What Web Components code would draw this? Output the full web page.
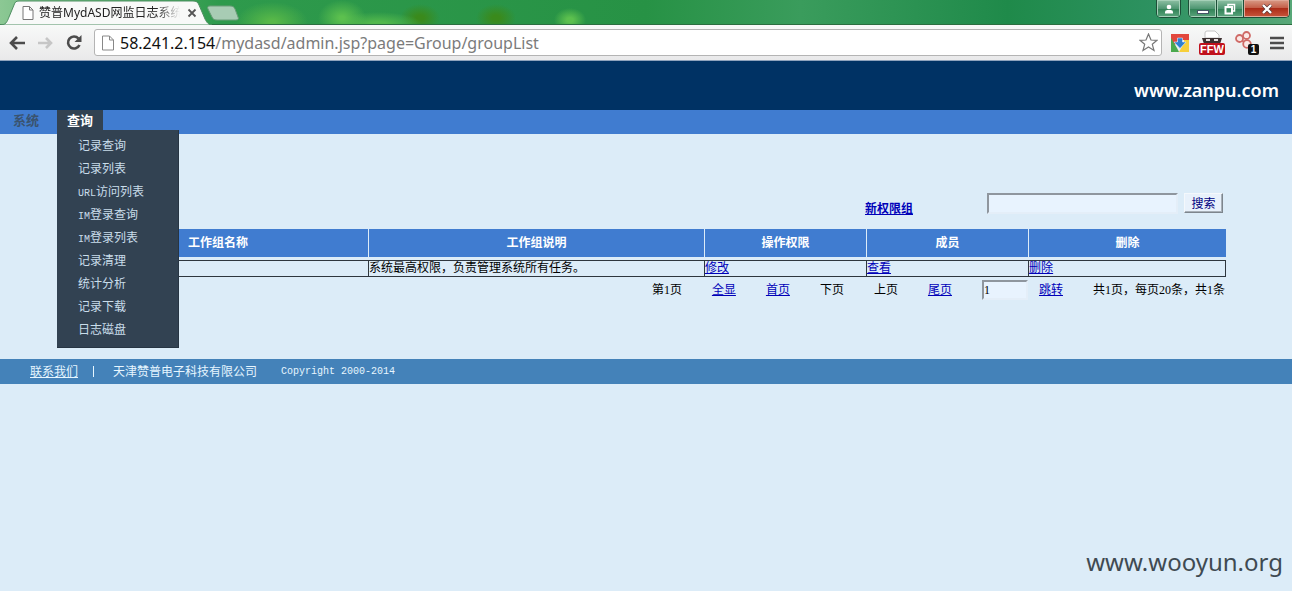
<!DOCTYPE html>
<html lang="zh-CN">
<head>
<meta charset="utf-8">
<title>赞普MydASD网监日志系统</title>
<style>
html, body { margin: 0; background: #dcecf8; }
body { font: 12px/16px "Liberation Serif", "Noto Sans CJK SC", sans-serif; color: #000; }
</style>
</head>
<body>
<app-window></app-window>
<script>
const define = (name, html) => {
  const tpl = document.createElement('template');
  tpl.innerHTML = html;
  customElements.define(name, class extends HTMLElement {
    constructor() {
      super();
      this.attachShadow({ mode: 'open' }).append(tpl.content.cloneNode(true));
    }
  });
};

define('tab-strip', `
<style>
:host { display: flex; height: 25px; overflow: hidden; justify-content: space-between;
  background:
    radial-gradient(ellipse 36px 20px at 272px 22px, #58b848 10%, transparent),
    radial-gradient(ellipse 24px 18px at 342px 18px, #5cc04e 10%, transparent),
    radial-gradient(ellipse 44px 12px at 378px 24px, #52b84c 20%, transparent),
    radial-gradient(ellipse 20px 14px at 420px 18px, #3a8a1c 20%, transparent),
    radial-gradient(ellipse 20px 14px at 496px 18px, #3a8a1c 20%, transparent),
    radial-gradient(ellipse 16px 12px at 570px 20px, #5cc04e 20%, transparent),
    linear-gradient(90deg, #8cc894 0, #6cb87c 60px, #2e9a4c 220px, #279245 50%, #3a9c5c 62%, #1f8a4a 78%, #2e9262 90%, #58a878);
  box-shadow: inset 0 -1px #2c6e40; }
.tab { display: grid; grid-template-areas: "a"; width: 208px; height: 25px; }
.tab > * { grid-area: a; }
.in { display: flex; align-items: center; padding-left: 22px; gap: 5px; font: 12px/16px "Noto Sans", "Noto Sans CJK SC", sans-serif; color: #222; }
.in span { white-space: nowrap; -webkit-mask-image: linear-gradient(90deg, #000 118px, transparent 141px); }
.in button { border: 0; background: none; padding: 0; width: 10px; height: 10px; display: flex; }
.win { display: flex; gap: 7px; align-items: flex-start; margin-right: 2px; }
.grp { display: flex; border: 1px solid #1d4f38; border-top: 0; border-radius: 0 0 5px 5px; overflow: hidden; }
.grp button { box-sizing: border-box; border: 0; padding: 0; height: 17px; width: 27px; display: grid; place-items: center; background: linear-gradient(#8ec0a4, #4f9672 50%, #2f8054 51%, #5aa47c); box-shadow: inset 0 0 0 1px #a6d0b8; }
.grp button + button { border-left: 1px solid #1d4f38; }
.grp .user { width: 23px; }
.grp .x { width: 46px; background: linear-gradient(#d89a86, #c4604a 45%, #ac2c18 50%, #c8563c); box-shadow: inset 0 0 0 1px #e0a898; }
</style>
<div class="tab">
  <svg width="240" height="25" viewBox="0 0 240 25"><path d="M0 25C6 25 7 22 9 17L14 5C15 2 16 1 19 1H193C196 1 198 2 199 5L205 19C207 23 209 25 212 25Z" fill="#f8f9f8" stroke="#4f8f62"/><path d="M210 6H230C233 6 234 7 235 9L238 17C239 19 238 20 236 20H217C214 20 213 19 212 17L208 9C207 7 208 6 210 6Z" fill="#a8ccb4" stroke="#6a9c78"/></svg>
  <div class="in">
    <svg width="12" height="14" viewBox="0 0 12 14"><path d="M1 .5H7.500L11 4V13.500H1ZM7.500 .5V4H11" fill="#fff" stroke="#777"/></svg>
    <span>赞普MydASD网监日志系统</span>
    <button aria-label="关闭标签页"><svg width="10" height="10" viewBox="0 0 10 10"><path d="M1.500 1.500L8.500 8.500M8.500 1.500L1.500 8.500" stroke="#555" stroke-width="1.800"/></svg></button>
  </div>
</div>
<div class="win">
  <div class="grp"><button class="user" aria-label="用户"><svg width="10" height="10" viewBox="0 0 10 10"><circle cx="5" cy="3" r="2.300" fill="#fff"/><path d="M1 9.500V8Q1 6 3.500 6H6.500Q9 6 9 8V9.500Z" fill="#fff"/></svg></button></div>
  <div class="grp"><button aria-label="最小化"><svg width="12" height="12" viewBox="0 0 12 12"><rect x=".5" y="7.500" width="11" height="3" fill="#fff" stroke="#456"/></svg></button><button aria-label="还原"><svg width="12" height="12" viewBox="0 0 12 12"><path d="M4 3V1.500H10.500V8H9" fill="none" stroke="#fff" stroke-width="1.500"/><rect x="1.500" y="4" width="6.500" height="6.500" fill="none" stroke="#fff" stroke-width="2"/></svg></button><button class="x" aria-label="关闭"><svg width="12" height="10" viewBox="0 0 12 10"><path d="M2 1L10 9M10 1L2 9" stroke="#533" stroke-width="3.600"/><path d="M2 1L10 9M10 1L2 9" stroke="#fff" stroke-width="2.400"/></svg></button></div>
</div>`);

define('tool-bar', `
<style>
:host { display: flex; align-items: center; height: 36px; box-sizing: border-box; padding: 0 8px; background: linear-gradient(#f8f9f8, #e9e9ea); border-bottom: 1px solid #8fa3bd; }
button { border: 0; background: none; padding: 0; display: flex; }
.nav { display: flex; gap: 12px; width: 86px; align-items: center; }
.box { flex: 1; display: flex; align-items: center; height: 27px; box-sizing: border-box; border: 1px solid #b4b4b4; border-radius: 3px; background: #fff; padding: 0 3px 0 7px; gap: 6px; font: 16px/22px "Noto Sans", sans-serif; color: #7b7b7b; }
.box a { flex: 1; color: inherit; text-decoration: none; white-space: nowrap; }
b { color: #111; font-weight: 400; }
.ext { display: flex; align-items: center; gap: 8px; padding-left: 8px; }
.menu { margin-left: 2px; }
text { font-family: "Liberation Sans", sans-serif; font-weight: 700; fill: #fff; }
</style>
<div class="nav">
  <button aria-label="后退"><svg width="18" height="16" viewBox="0 0 18 16"><path d="M17 8H3M9 2L3 8L9 14" fill="none" stroke="#4c4c4c" stroke-width="2.600"/></svg></button>
  <button aria-label="前进"><svg width="16" height="16" viewBox="0 0 16 16"><path d="M0 8H13M8 3L13 8L8 13" fill="none" stroke="#c6c6c6" stroke-width="2.600"/></svg></button>
  <button aria-label="刷新"><svg width="17" height="17" viewBox="0 0 17 17"><path d="M13.500 11A6 6 0 1 1 12.500 4.500" fill="none" stroke="#4c4c4c" stroke-width="2.600"/><path d="M15.500 1V8H8.500Z" fill="#4c4c4c"/></svg></button>
</div>
<div class="box">
  <svg width="12" height="16" viewBox="0 0 12 16"><path d="M.5 1H7.500L11.500 5V15H.5ZM7.500 1V5H11.500" fill="#fff" stroke="#888"/></svg>
  <a href="#"><b>58.241.2.154</b>/mydasd/admin.jsp?page=Group/groupList</a>
  <button aria-label="收藏"><svg width="19" height="19" viewBox="0 0 19 19"><path d="M9.500 1L12 7L18 7.300L13.300 11.300L15 17.500L9.500 14L4 17.500L5.700 11.300L1 7.300L7 7Z" fill="#fff" stroke="#777" stroke-width="1.200"/></svg></button>
</div>
<div class="ext">
  <button aria-label="下载扩展"><svg width="20" height="20" viewBox="0 0 20 20"><path d="M1 1H19V7H8L5 12L1 7Z" fill="#e2473c"/><path d="M1 5L7 15L9 19H1Z" fill="#4aa94e"/><path d="M19 7V19H9L14 10V7Z" fill="#f7cf3a"/><path d="M7.500 5H12.500V9H16L10 15.500L4 9H7.500Z" fill="#2d7fd0" stroke="#d8ecff" stroke-width=".6"/></svg></button>
  <button aria-label="FFW"><svg width="28" height="26" viewBox="0 0 28 26"><path d="M7 8V3Q7 1 9 1H17L21 5V8Z" fill="#fff" stroke="#c4c4c4"/><path d="M4 8H24L22 14H6Z" fill="#3c3030"/><rect x="8" y="9" width="4" height="2" fill="#e8e0e0"/><rect x="16" y="9" width="4" height="2" fill="#e8e0e0"/><rect x="1" y="13" width="26" height="12" rx="2" fill="#c0101c"/><text x="14" y="23" font-size="11" text-anchor="middle">FFW</text></svg></button>
  <button aria-label="通知"><svg width="26" height="26" viewBox="0 0 26 26"><g fill="#fbe9e6" stroke="#cf6a66" stroke-width="1.800"><circle cx="5.500" cy="8.500" r="3.500"/><circle cx="12.500" cy="5.500" r="3.500"/><circle cx="13" cy="14" r="3.800"/></g><path d="M8 10.500L10 12" stroke="#cf6a66" stroke-width="1.800"/><rect x="14" y="14" width="11" height="11" rx="2" fill="#111"/><text x="19.500" y="23" font-size="10" text-anchor="middle">1</text></svg></button>
  <button class="menu" aria-label="菜单"><svg width="14" height="14" viewBox="0 0 14 14"><path d="M0 2H14M0 7H14M0 12H14" stroke="#4c4c4c" stroke-width="2.600"/></svg></button>
</div>`);

define('site-banner', `
<style>
:host { display: flex; justify-content: flex-end; align-items: center; height: 49px; box-sizing: border-box; padding: 8px 13px 0 0; background: #003264; color: #fff; font: 600 18px/24px "Noto Sans", sans-serif; }
</style>
<slot></slot>`);

define('site-menu', `
<style>
:host { display: flex; height: 24px; background: #407cd0; font-size: 12px; }
a { color: inherit; text-decoration: none; }
.top { font: 700 13px/22px "Liberation Serif", "Noto Sans CJK SC", sans-serif; color: #3a536f; padding: 0 18px 0 13px; }
.open { position: relative; width: 46px; height: 20px; background: #324252; }
.open > .top { display: block; padding: 0 0 0 10px; color: #fff; }
ul { position: absolute; z-index: 2; left: 0; top: 20px; width: 122px; height: 218px; box-sizing: border-box; margin: 0; padding: 5px 0 5px 21px; list-style: none; background: #324252; border: solid #273543; border-width: 0 1px 1px 0; color: #c9ddea; line-height: 23px; }
li { height: 23px; white-space: nowrap; }
i { font: 10px/16px "Liberation Mono", monospace; }
</style>
<a class="top" href="#">系统</a>
<div class="open"><a class="top" href="#">查询</a>
<ul>
<li><a href="#">记录查询</a></li><li><a href="#">记录列表</a></li><li><a href="#"><i>URL</i>访问列表</a></li><li><a href="#"><i>IM</i>登录查询</a></li><li><a href="#"><i>IM</i>登录列表</a></li><li><a href="#">记录清理</a></li><li><a href="#">统计分析</a></li><li><a href="#">记录下载</a></li><li><a href="#">日志磁盘</a></li>
</ul></div>`);

define('group-search', `
<style>
:host { display: flex; justify-content: flex-end; align-items: flex-start; padding-right: 3px; }
a { font-weight: 700; color: #0000b8; margin: 8px 74px 0 0; }
input { width: 191px; height: 21px; box-sizing: border-box; border: 2px solid; border-color: #8f969e #e4eef8 #e4eef8 #8f969e; background: #e8f3fe; margin-right: 6px; }
button { width: 39px; height: 20px; box-sizing: border-box; padding: 0; border: 1px solid; border-color: #f4f8fc #7d858d #7d858d #f4f8fc; box-shadow: inset -1px -1px #a8b0b8; background: #e8f1fb; color: #000080; font: 12px/16px "Noto Sans CJK SC", sans-serif; }
</style>
<a href="#">新权限组</a><input type="text" aria-label="搜索"><button>搜索</button>`);

define('group-table', `
<style>
:host { display: block; }
table { width: 100%; table-layout: fixed; border-collapse: separate; border-spacing: 0; }
th { height: 28px; padding: 0; background: #407cd0; color: #fff; font-weight: 700; border-right: 1px solid #dcecf8; border-bottom: 3px solid #dcecf8; }
th:last-child { border-right: 0; }
td { height: 15px; padding: 0; line-height: 15px; border: 1px solid #2e363e; border-left-width: 0; white-space: nowrap; }
td:first-child { border-left-width: 1px; }
a { color: #0000b8; }
</style>
<table>
<colgroup><col style="width:26%"><col style="width:29%"><col style="width:14%"><col style="width:14%"><col style="width:17%"></colgroup>
<thead><tr><th>工作组名称</th><th>工作组说明</th><th>操作权限</th><th>成员</th><th>删除</th></tr></thead>
<tbody><tr><td></td><td>系统最高权限，负责管理系统所有任务。</td><td><a href="#">修改</a></td><td><a href="#">查看</a></td><td><a href="#">删除</a></td></tr></tbody>
</table>`);

define('page-nav', `
<style>
:host { display: flex; justify-content: flex-end; align-items: center; gap: 30px; margin-top: 3px; padding-right: 1px; white-space: nowrap; }
a { color: #0000b8; }
.jump { display: flex; align-items: center; gap: 11px; }
input { width: 46px; height: 20px; box-sizing: border-box; padding: 0; border: 2px solid; border-color: #8f969e #e4eef8 #e4eef8 #8f969e; background: #e8f3fe; font: 12px/16px "Liberation Serif", serif; }
</style>
<span>第1页</span><a href="#">全显</a><a href="#">首页</a><span>下页</span><span>上页</span><a href="#">尾页</a>
<span class="jump"><input type="text" value="1" aria-label="页码"><a href="#">跳转</a></span>
<span>共1页，每页20条，共1条</span>`);

define('site-footer', `
<style>
:host { display: flex; align-items: center; height: 25px; padding-left: 30px; background: #4482b9; color: #e6f6ff; }
a { color: inherit; }
i { width: 1px; height: 11px; background: #e6f6ff; margin: 0 19px 0 15px; }
small { font: 10px/16px "Liberation Mono", monospace; margin-left: 24px; }
</style>
<a href="#">联系我们</a><i></i><span>天津赞普电子科技有限公司</span><small>Copyright 2000-2014</small>`);

define('app-window', `
<style>
:host { display: flex; flex-direction: column; min-height: 100vh; }
main { padding: 59px 66px 59px 68px; }
group-table { margin-top: 12px; }
.mark { margin: auto 9px 12px auto; font: 24px/34px "Noto Sans", sans-serif; color: #3f4a52; }
</style>
<tab-strip></tab-strip><tool-bar></tool-bar>
<site-banner>www.zanpu.com</site-banner>
<site-menu></site-menu>
<main><group-search></group-search><group-table></group-table><page-nav></page-nav></main>
<site-footer></site-footer>
<div class="mark">www.wooyun.org</div>`);
</script>
</body>
</html>
